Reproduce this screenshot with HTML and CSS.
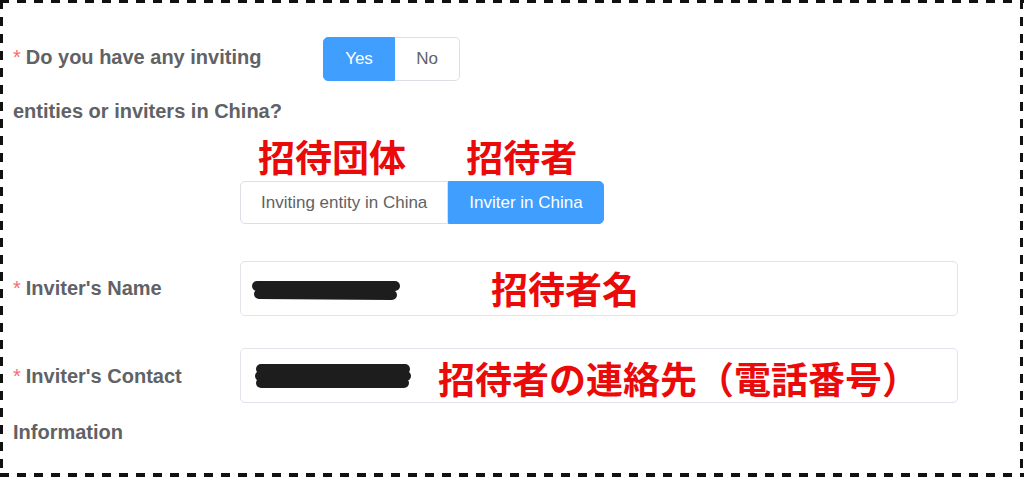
FILE: index.html
```html
<!DOCTYPE html>
<html lang="ja">
<head>
<meta charset="utf-8">
<title>Inviter form</title>
<link rel="stylesheet" href="styles.css">
</head>
<body>
<div class="page">
  <div class="form">
    <div class="row row-q">
      <div class="label label-wide"><span class="req">*</span>Do you have any inviting entities or inviters in China?</div>
      <div class="group group-yesno">
        <span class="rb rb-active rb-first">Yes</span><span class="rb rb-last">No</span>
      </div>
    </div>

    <div class="row row-type">
      <div class="type-col">
        <div class="note">招待団体</div>
        <span class="rb rb-first">Inviting entity in China</span>
      </div>
      <div class="type-col">
        <div class="note">招待者</div>
        <span class="rb rb-active rb-last">Inviter in China</span>
      </div>
    </div>

    <div class="row row-name">
      <div class="label label-std"><span class="req">*</span>Inviter's Name</div>
      <div class="input input-name">
        <svg class="redact redact-name" width="150" height="24" viewBox="0 0 150 24" aria-hidden="true">
          <line x1="6" y1="7" x2="144" y2="7" stroke="#1d1d1d" stroke-width="10" stroke-linecap="round"/>
          <line x1="8" y1="15" x2="141" y2="16" stroke="#1d1d1d" stroke-width="10" stroke-linecap="round"/>
        </svg>
        <span class="note note-inline note-name">招待者名</span>
      </div>
    </div>

    <div class="row row-contact">
      <div class="label label-std label-contact"><span class="req">*</span>Inviter's Contact Information</div>
      <div class="input input-contact">
        <svg class="redact redact-contact" width="156" height="28" viewBox="0 0 156 28" aria-hidden="true">
          <line x1="6" y1="7" x2="150" y2="7" stroke="#1d1d1d" stroke-width="10" stroke-linecap="round"/>
          <line x1="5" y1="14" x2="151" y2="14" stroke="#1d1d1d" stroke-width="10" stroke-linecap="round"/>
          <line x1="6" y1="21" x2="149" y2="21" stroke="#1d1d1d" stroke-width="10" stroke-linecap="round"/>
        </svg>
        <span class="note note-inline note-contact">招待者の連絡先（電話番号）</span>
      </div>
    </div>
  </div>
</div>
</body>
</html>
```

FILE: styles.css
```css
* { box-sizing: border-box; }

html, body {
  margin: 0;
  padding: 0;
  background: #ffffff;
}

.page {
  width: 1024px;
  height: 477px;
  background:
    repeating-linear-gradient(90deg, #111 0 9px, transparent 9px 17px) left top / 100% 3px no-repeat,
    repeating-linear-gradient(90deg, #111 0 9px, transparent 9px 17px) left bottom / 100% 4px no-repeat,
    repeating-linear-gradient(180deg, #111 0 9px, transparent 9px 17px) left top / 3px 100% no-repeat,
    repeating-linear-gradient(180deg, #111 0 9px, transparent 9px 17px) 1020px 0 / 3px 100% no-repeat,
    #ffffff;
  overflow: hidden;
}

.form {
  padding: 30px 0 0 13px;
  font-family: "Liberation Sans", Arial, sans-serif;
}

.row {
  display: flex;
  align-items: flex-start;
}

.label {
  font-size: 20px;
  font-weight: 700;
  color: #606266;
}

.label-wide {
  width: 310px;
  line-height: 54px;
}

.label-std {
  width: 227px;
  line-height: 55px;
}

.label-contact {
  line-height: 56px;
}

.req {
  color: #f56c6c;
  font-weight: 400;
  margin-right: 5px;
}

.group {
  display: flex;
}

.group-yesno {
  margin-top: 7px;
}

.rb {
  display: inline-flex;
  align-items: center;
  justify-content: center;
  height: 44px;
  padding: 0 20px;
  font-size: 17px;
  color: #606266;
  background: #ffffff;
  border: 1px solid #dcdfe6;
  white-space: nowrap;
}

.group-yesno .rb {
  width: 72px;
  padding: 0;
}

.group-yesno .rb-last {
  width: 65px;
  border-left: none;
}

.rb-first { border-radius: 5px 0 0 5px; }
.rb-last { border-radius: 0 5px 5px 0; }

.rb-active {
  background: #409eff;
  border-color: #409eff;
  color: #ffffff;
}

.row-type {
  margin-left: 227px;
}

.row-type .rb {
  height: 43px;
}

.type-col {
  display: flex;
  flex-direction: column;
}

.note {
  font-family: "Noto Sans CJK JP", "Noto Sans CJK SC", sans-serif;
  font-weight: 700;
  font-size: 37px;
  line-height: 37px;
  color: #ea0a0a;
  white-space: nowrap;
}

.type-col .note {
  padding-left: 18px;
  margin-bottom: 6px;
}

.row-name {
  margin-top: 37px;
}

.row-contact {
  margin-top: 32px;
}

.input {
  width: 718px;
  height: 55px;
  border: 1px solid #e1e4ea;
  border-radius: 5px;
  display: flex;
  align-items: center;
  background: #ffffff;
}

.redact {
  display: block;
  flex: none;
}

.redact-name {
  margin-left: 10px;
  margin-top: 4px;
}

.redact-contact {
  margin-left: 14px;
  margin-top: 0;
}

.note-name {
  margin-left: 90px;
}

.note-contact {
  margin-left: 27px;
  margin-top: 6px;
}
```
